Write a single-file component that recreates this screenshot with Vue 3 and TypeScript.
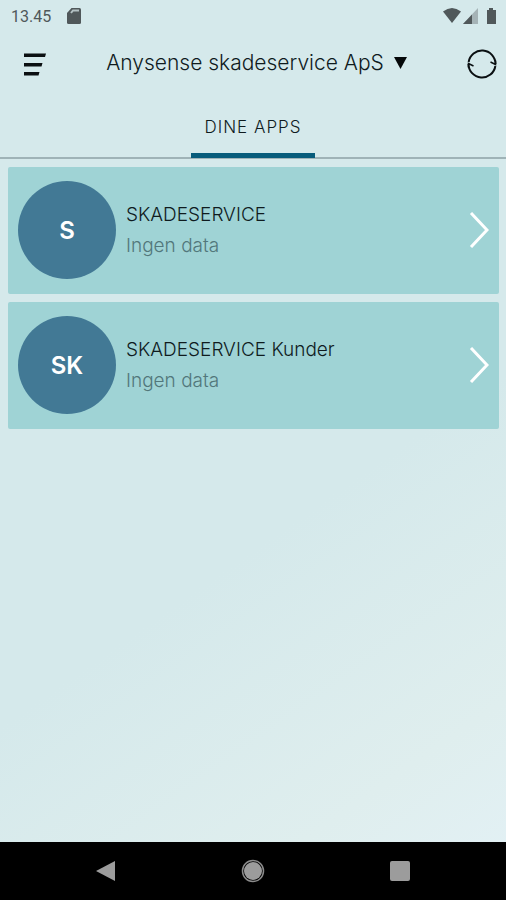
<script setup lang="ts">
interface AppEntry {
  id: number
  initials: string
  name: string
  status: string
}

const organisation = 'Anysense skadeservice ApS'
const apps: AppEntry[] = [
  { id: 1, initials: 'S', name: 'SKADESERVICE', status: 'Ingen data' },
  { id: 2, initials: 'SK', name: 'SKADESERVICE Kunder', status: 'Ingen data' },
]
</script>

<template>
  <div class="screen">
    <div class="status">
      <span class="clock">13.45</span>
      <svg class="sd" width="14" height="16" viewBox="0 0 14 16" aria-hidden="true">
        <path d="M4.500 0H12.500Q14 0 14 1.500V14.500Q14 16 12.500 16H1.500Q0 16 0 14.500V5Z" fill="#50585a" />
        <path d="M4 5L6 2.500H12" fill="none" stroke="#b3c1c3" stroke-width="2" />
      </svg>
      <svg class="signals" width="56" height="18" viewBox="0 0 56 18" aria-hidden="true">
        <path d="M1 4.500Q10-2.500 19 4.500L10 16Z" fill="#50585a" />
        <path d="M36 1V17H21Z" fill="#a5b3b6" />
        <path d="M30 7.500V17H21Z" fill="#50585a" />
        <path d="M47 1h4v2h3v14H45V3h2z" fill="#50585a" />
      </svg>
    </div>

    <header class="bar">
      <button class="icon-button" type="button" aria-label="Menu">
        <svg width="24" height="24" viewBox="0 0 24 24" aria-hidden="true">
          <path d="M2 1.500H24L23 5H2ZM2 11H20.500L19.500 14.500H2ZM2 20H17.500L16.500 23.500H2Z" fill="#0b1012" />
        </svg>
      </button>
      <button class="picker" type="button" aria-haspopup="listbox">
        <span>{{ organisation }}</span>
        <svg width="13" height="12" viewBox="0 0 13 12" aria-hidden="true">
          <path d="M0 0H13L6.500 12Z" fill="#050809" />
        </svg>
      </button>
      <button class="icon-button" type="button" aria-label="Opdater">
        <svg width="30" height="30" viewBox="0 0 30 30" fill="none" stroke="#0b1012" stroke-width="2" aria-hidden="true">
          <path d="M1.650 13A13.500 13.500 0 0 1 28.500 15M28.350 17A13.500 13.500 0 0 1 1.500 15" />
          <path d="M23.500 13L28.500 15.500V11.500M6.500 17L1.500 14.500V18.500" stroke-width="1.500" />
        </svg>
      </button>
    </header>

    <nav class="tabs">
      <button class="tab" type="button" aria-current="page">DINE APPS</button>
    </nav>

    <main class="list">
      <a v-for="app in apps" :key="app.id" class="card" href="#">
        <span class="avatar">{{ app.initials }}</span>
        <span class="texts">
          <span class="name">{{ app.name }}</span>
          <span class="note">{{ app.status }}</span>
        </span>
        <svg class="chevron" width="20" height="36" viewBox="0 0 20 36" aria-hidden="true">
          <path d="M2 1L18 18L2 35" fill="none" stroke="#fff" stroke-width="3" />
        </svg>
      </a>
    </main>

    <footer class="system">
      <button type="button" aria-label="Tilbage">
        <svg width="22" height="22" viewBox="0 0 22 22" aria-hidden="true">
          <path d="M1 11L20 1V21Z" fill="#9c9c9c" />
        </svg>
      </button>
      <button type="button" aria-label="Hjem">
        <svg width="24" height="24" viewBox="0 0 24 24" aria-hidden="true">
          <circle cx="12" cy="12" r="9" fill="#9c9c9c" />
          <circle cx="12" cy="12" r="10.500" fill="none" stroke="#8c8c8c" stroke-width="1.500" />
        </svg>
      </button>
      <button type="button" aria-label="Seneste">
        <svg width="22" height="22" viewBox="0 0 22 22" aria-hidden="true">
          <rect x="1" y="1" width="20" height="20" rx="2" fill="#9c9c9c" />
        </svg>
      </button>
    </footer>
  </div>
</template>

<style>
body {
  margin: 0;
}
</style>

<style scoped>
.screen {
  display: flex;
  flex-direction: column;
  min-height: 100vh;
  background: linear-gradient(145deg, #d5e9eb 0%, #d5e9eb 58%, #dfeeee 84%, #e3f1f6 100%);
  color: #0f1b1e;
  font-family: Inter, "Open Sans", sans-serif;
}

button {
  margin: 0;
  padding: 0;
  border: 0;
  background: none;
  color: inherit;
  font: inherit;
  cursor: pointer;
}

svg {
  display: block;
  flex: none;
}

.status {
  display: flex;
  align-items: center;
  height: 32px;
  padding: 0 8px 0 11px;
}

.clock {
  color: #50585a;
  font-family: Roboto, sans-serif;
  font-size: 16px;
}

.sd {
  margin-left: 16px;
}

.signals {
  margin-left: auto;
}

.bar {
  display: flex;
  align-items: center;
  justify-content: space-between;
  height: 64px;
  padding: 0 9px 0 22px;
}

.picker {
  display: flex;
  align-items: center;
  gap: 10px;
  padding-bottom: 3px;
  font-size: 21px;
  font-weight: 300;
  line-height: 28px;
}

.tabs {
  display: flex;
  justify-content: center;
  height: 61px;
  border-bottom: 2px solid #9fb3b7;
}

.tab {
  width: 124px;
  margin-bottom: -1px;
  padding-top: 4px;
  border-bottom: 5px solid #075c7b;
  font-size: 17px;
  font-weight: 300;
  letter-spacing: 1px;
}

.list {
  display: flex;
  flex: 1;
  flex-direction: column;
  gap: 8px;
  padding: 8px 7px 8px 8px;
}

.card {
  display: flex;
  align-items: center;
  gap: 10px;
  padding: 14px 10px 15px;
  border-radius: 2px;
  background: #9fd3d5;
  color: inherit;
  text-decoration: none;
}

.avatar {
  display: flex;
  flex: none;
  align-items: center;
  justify-content: center;
  width: 98px;
  height: 98px;
  border-radius: 50%;
  background: #427995;
  color: #fff;
  font-size: 24px;
  font-weight: 600;
}

.texts {
  display: flex;
  flex: 1;
  flex-direction: column;
  gap: 3px;
  min-width: 0;
  font-size: 19px;
  font-weight: 300;
  line-height: 28px;
}

.note {
  color: #52777b;
}

.system {
  display: flex;
  align-items: center;
  justify-content: space-between;
  height: 58px;
  padding: 0 95px;
  background: #000;
}
</style>
